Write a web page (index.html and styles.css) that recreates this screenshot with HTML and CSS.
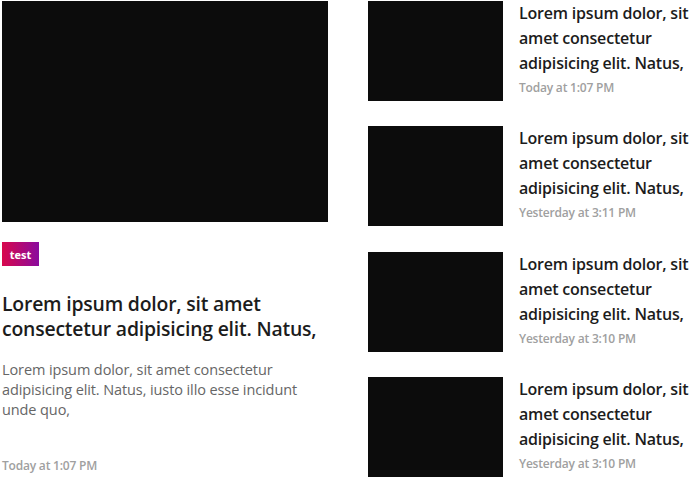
FILE: index.html
```html
<!DOCTYPE html>
<html lang="en">
<head>
<meta charset="utf-8">
<link rel="stylesheet" href="styles.css">
</head>
<body>
<div class="page">
  <article class="feature">
    <div class="feature-img"></div>
    <span class="tag">test</span>
    <h2 class="feature-title">Lorem ipsum dolor, sit amet consectetur adipisicing elit. Natus,</h2>
    <p class="feature-text">Lorem ipsum dolor, sit amet consectetur adipisicing elit. Natus, iusto illo esse incidunt unde quo,</p>
    <div class="date">Today at 1:07 PM</div>
  </article>
  <div class="list">
    <article class="item">
      <div class="thumb"></div>
      <div class="item-body">
        <h3 class="item-title">Lorem ipsum dolor, sit amet consectetur adipisicing elit. Natus,</h3>
        <div class="item-date">Today at 1:07 PM</div>
      </div>
    </article>
    <article class="item">
      <div class="thumb"></div>
      <div class="item-body">
        <h3 class="item-title">Lorem ipsum dolor, sit amet consectetur adipisicing elit. Natus,</h3>
        <div class="item-date">Yesterday at 3:11 PM</div>
      </div>
    </article>
    <article class="item">
      <div class="thumb"></div>
      <div class="item-body">
        <h3 class="item-title">Lorem ipsum dolor, sit amet consectetur adipisicing elit. Natus,</h3>
        <div class="item-date">Yesterday at 3:10 PM</div>
      </div>
    </article>
    <article class="item">
      <div class="thumb"></div>
      <div class="item-body">
        <h3 class="item-title">Lorem ipsum dolor, sit amet consectetur adipisicing elit. Natus,</h3>
        <div class="item-date">Yesterday at 3:10 PM</div>
      </div>
    </article>
  </div>
</div>
</body>
</html>
```
FILE: styles.css
```css
html, body {
  margin: 0;
  background: #fff;
}
body {
  padding: 1px 0 0 2px;
  font-family: "Open Sans", "Noto Sans", sans-serif;
  overflow: hidden;
}
.page {
  display: flex;
  gap: 40px;
  align-items: flex-start;
}
.feature {
  width: 326px;
  flex: none;
  display: flex;
  flex-direction: column;
  align-items: flex-start;
}
.feature-img {
  width: 326px;
  height: 221px;
  background: #0c0c0c;
}
.tag {
  margin-top: 20px;
  height: 24px;
  width: 37px;
  display: flex;
  align-items: center;
  justify-content: center;
  color: #fff;
  font-size: 11px;
  font-weight: 700;
  background: linear-gradient(90deg, #d8084c, #8a0b9e);
}
.feature-title {
  margin: 25px 0 0;
  font-size: 19.4px;
  font-weight: 600;
  line-height: 25px;
  color: #1c1c1c;
  letter-spacing: -0.2px;
}
.feature-text {
  margin: 19px 0 0;
  font-size: 14.5px;
  line-height: 20px;
  color: #666;
  letter-spacing: -0.1px;
}
.date {
  margin-top: 37px;
  font-size: 12px;
  font-weight: 600;
  color: #a0a0a0;
  letter-spacing: -0.2px;
}
.list {
  display: flex;
  flex-direction: column;
  gap: 25.4px;
}
.item {
  display: flex;
  gap: 16px;
}
.thumb {
  width: 135px;
  height: 100px;
  flex: none;
  background: #0c0c0c;
}
.item-body {
  width: 172px;
}
.item-title {
  margin: 0;
  font-size: 16px;
  font-weight: 600;
  line-height: 25px;
  color: #1c1c1c;
  letter-spacing: -0.2px;
}
.item-date {
  margin-top: 3px;
  font-size: 12px;
  font-weight: 600;
  color: #a0a0a0;
  letter-spacing: -0.2px;
}
```
